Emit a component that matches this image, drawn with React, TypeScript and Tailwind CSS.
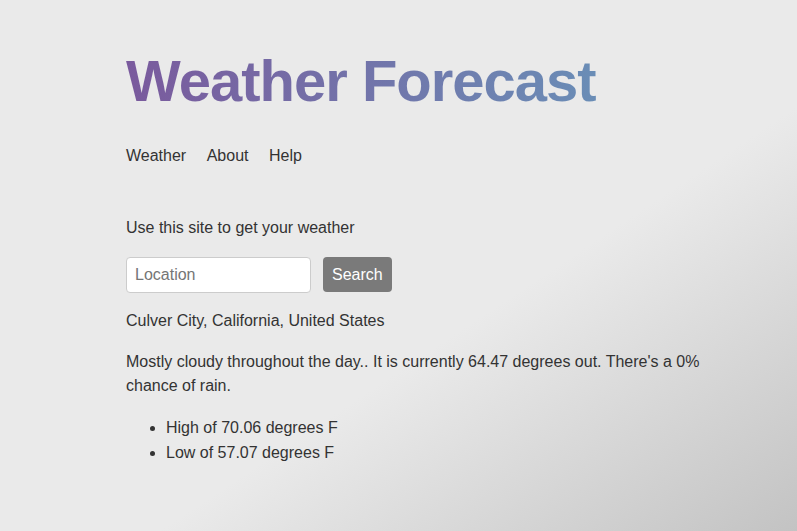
export default function App() {
  return (
    <div className="min-h-screen bg-[linear-gradient(to_bottom_right,#eaeaea_60%,#c3c3c3_100%)] font-['Liberation_Sans',Arial,sans-serif] text-[#333333]">
      <div className="ml-[126px] w-[600px] pt-[52px] pb-10">
        <h1 className="w-fit bg-[linear-gradient(to_right,#7a5a9d,#6a8db6)] bg-clip-text text-[58px] font-bold leading-none tracking-[-1px] text-transparent">
          Weather Forecast
        </h1>

        <nav className="mt-[34px] flex gap-[20.5px] text-base leading-6">
          <a href="#">Weather</a>
          <a href="#">About</a>
          <a href="#">Help</a>
        </nav>

        <p className="mt-[48px] text-base leading-6">Use this site to get your weather</p>

        <form className="mt-[17px] flex gap-[12px]" onSubmit={(e) => e.preventDefault()}>
          <input
            type="text"
            placeholder="Location"
            className="h-[36px] w-[185px] rounded-[4px] border border-[#cccccc] bg-white px-[8px] text-base outline-none placeholder:text-[#757575]"
          />
          <button type="submit" className="h-[35px] rounded-[4px] bg-[#7a7a7a] px-[9px] text-base text-white">
            Search
          </button>
        </form>

        <p className="mt-[16px] text-base leading-6">Culver City, California, United States</p>
        <p className="mt-[17px] text-base leading-6">
          Mostly cloudy throughout the day.. It is currently 64.47 degrees out. There's a 0% chance of rain.
        </p>

        <ul className="mt-[17px] list-disc pl-[40px] text-base leading-[25px]">
          <li>High of 70.06 degrees F</li>
          <li>Low of 57.07 degrees F</li>
        </ul>
      </div>
    </div>
  );
}
